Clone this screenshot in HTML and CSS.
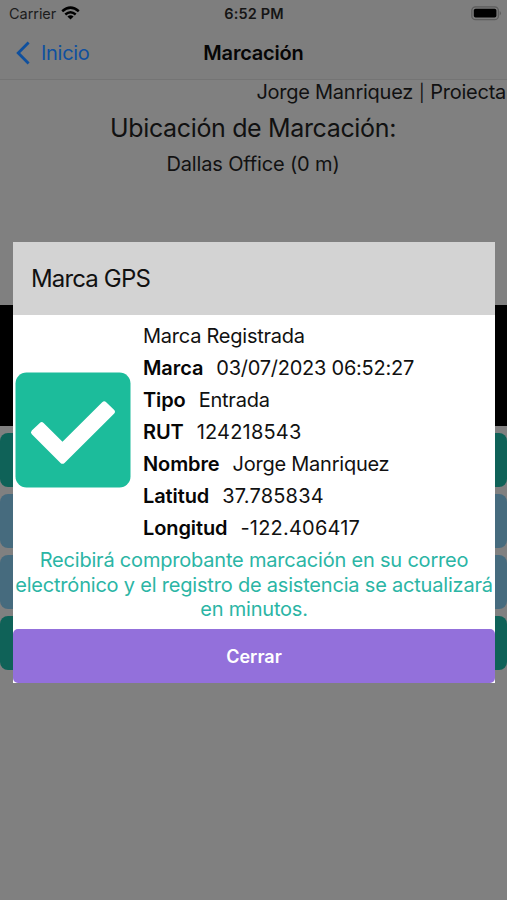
FILE: index.html
```html
<!DOCTYPE html>
<html lang="es">
<head>
<meta charset="utf-8">
<meta name="viewport" content="width=device-width, initial-scale=1">
<title>Marcación</title>
<link rel="stylesheet" href="styles.css">
</head>
<body>
<div class="screen">
  <header class="top">
    <div class="status">
      <div class="carrier"><span>Carrier</span>
        <svg class="wifi" width="19" height="14" viewBox="0 0 19 14"><g fill="none" stroke="#000" stroke-width="2.5"><path d="M1.2 5.2Q9.5-2 17.8 5.2"/><path d="M4.3 8.5Q9.5 4.1 14.7 8.5"/></g><path d="M6.4 10.4Q9.5 8 12.6 10.4L9.5 13.6Z"/></svg>
      </div>
      <div class="clock">6:52 PM</div>
      <svg class="battery" width="31" height="15" viewBox="0 0 31 15"><rect x=".8" y=".8" width="26.6" height="12.9" rx="3.8" fill="#7b7b7b" stroke="#5c5c5c" stroke-width="1.3"/><rect x="2.8" y="2.8" width="22.6" height="8.8" rx="1.8"/><path d="M28.7 5Q31.2 7.2 28.7 9.5Z" fill="#5c5c5c"/></svg>
    </div>
    <nav class="nav">
      <a class="back"><svg width="14" height="24" viewBox="0 0 14 24"><path d="M12.6 1.5 2.2 12 12.6 22.5" fill="none" stroke="#0f509e" stroke-width="2.8"/></svg><span>Inicio</span></a>
      <h1 class="title">Marcación</h1>
    </nav>
  </header>
  <main>
    <p class="user">Jorge Manriquez <span class="bar">|</span> Proiecta</p>
    <h2 class="place-title">Ubicación de Marcación:</h2>
    <p class="place">Dallas Office (0 m)</p>
    <div class="map"></div>
    <div class="actions">
      <div class="action teal"></div>
      <div class="action blue"></div>
      <div class="action blue"></div>
      <div class="action teal"></div>
    </div>
  </main>
  <section class="modal" role="dialog" aria-modal="true">
    <header class="modal-head"><span>Marca GPS</span></header>
    <div class="modal-body">
      <svg class="check" width="116" height="116" viewBox="0 0 116 116"><rect x=".5" y=".5" width="115" height="115" rx="11" fill="#1cbc9b"/><path d="M16.8 58.5 24.8 51Q26.7 49.2 28.6 51L47.5 69.8 87.2 30.2Q89.2 28.3 91.2 30.2L99 37.8Q101 39.8 99 41.7L49.5 90.9Q47.5 92.8 45.5 90.9L16.8 62.3Q15 60.4 16.8 58.5Z" fill="#fff"/></svg>
      <div class="details">
        <div class="row"><span>Marca Registrada</span></div>
        <div class="row"><b>Marca</b><span>03/07/2023 06:52:27</span></div>
        <div class="row"><b>Tipo</b><span>Entrada</span></div>
        <div class="row"><b>RUT</b><span class="digits">124218543</span></div>
        <div class="row"><b>Nombre</b><span>Jorge Manriquez</span></div>
        <div class="row"><b>Latitud</b><span class="digits">37.785834</span></div>
        <div class="row"><b>Longitud</b><span class="digits">-122.406417</span></div>
      </div>
    </div>
    <p class="note">Recibirá comprobante marcación en su correo<br>electrónico y el registro de asistencia se actualizará<br>en minutos.</p>
    <button class="close">Cerrar</button>
  </section>
</div>
</body>
</html>
```
FILE: styles.css
```css
* { box-sizing: border-box; }
body { margin: 0; font-family: Inter, "Liberation Sans", sans-serif; color: #111; }
h1, h2, p { margin: 0; font-weight: 400; }
.screen { position: relative; width: 507px; height: 900px; background: #808080; overflow: hidden; white-space: nowrap; }
.top { height: 79.5px; background: #7e7e7e; border-bottom: 1px solid #747474; }
.status { display: grid; grid-template-columns: 1fr auto 1fr; align-items: center; height: 27px; padding: 0 7px 0 9px; }
.carrier { display: flex; align-items: center; gap: 6px; font-size: 14.5px; letter-spacing: -.05px; color: #1c1c1c; }
.wifi { margin: -2px 0 0 -1px; }
.clock { font-size: 14.5px; font-weight: 600; letter-spacing: .15px; color: #151515; margin-left: -1px; }
.battery { justify-self: end; margin: -1px -2px 0 0; }
.nav { display: grid; grid-template-columns: 1fr auto 1fr; align-items: center; height: 51px; padding: 0 16px; }
.back { display: flex; align-items: center; gap: 11px; font-size: 20px; letter-spacing: -.3px; color: #0f509e; }
.title { font-size: 20px; font-weight: 600; letter-spacing: -.2px; color: #060606; }
.user { height: 25px; line-height: 25px; font-size: 20px; letter-spacing: -.25px; text-align: right; padding-right: 1px; }
.bar { font-size: 17px; margin: 0 .5px; }
.place-title { height: 47px; line-height: 47px; font-size: 25px; letter-spacing: -.35px; text-align: center; padding-right: 1px; }
.place { height: 25px; line-height: 25px; font-size: 20px; letter-spacing: -.15px; text-align: center; padding-right: 1px; }
.map { height: 121px; margin-top: 128.5px; background: #000; }
.actions { display: grid; gap: 7px; margin-top: 7px; }
.action { height: 54px; border-radius: 8px; }
.teal { background: #0f6258; }
.blue { background: #466b7e; }
.modal { position: absolute; left: 13px; top: 241.5px; width: 482px; height: 441.5px; background: #fff; color: #111; }
.modal-head { display: flex; align-items: center; height: 73px; padding-left: 18px; background: #d3d3d3; font-size: 24px; letter-spacing: -.85px; }
.modal-body { display: flex; align-items: center; gap: 12px; height: 233px; padding: 0 0 3px 2px; }
.check { margin-top: 0; }
.details { display: grid; grid-auto-rows: 32.15px; padding-top: 5px; }
.row { display: flex; align-items: center; gap: 13px; font-size: 20px; letter-spacing: -.24px; }
.row b { font-weight: 600; letter-spacing: -.1px; color: #060606; }
.row .digits { letter-spacing: .2px; }
.note { height: 81.5px; padding-top: .5px; line-height: 24.6px; font-size: 20px; letter-spacing: -.2px; text-align: center; color: #2bb5a5; }
.close { display: block; width: 482px; height: 54px; border: 0; border-radius: 5px; background: #9370db; color: #fff; font: 600 18px Inter, sans-serif; }
```
